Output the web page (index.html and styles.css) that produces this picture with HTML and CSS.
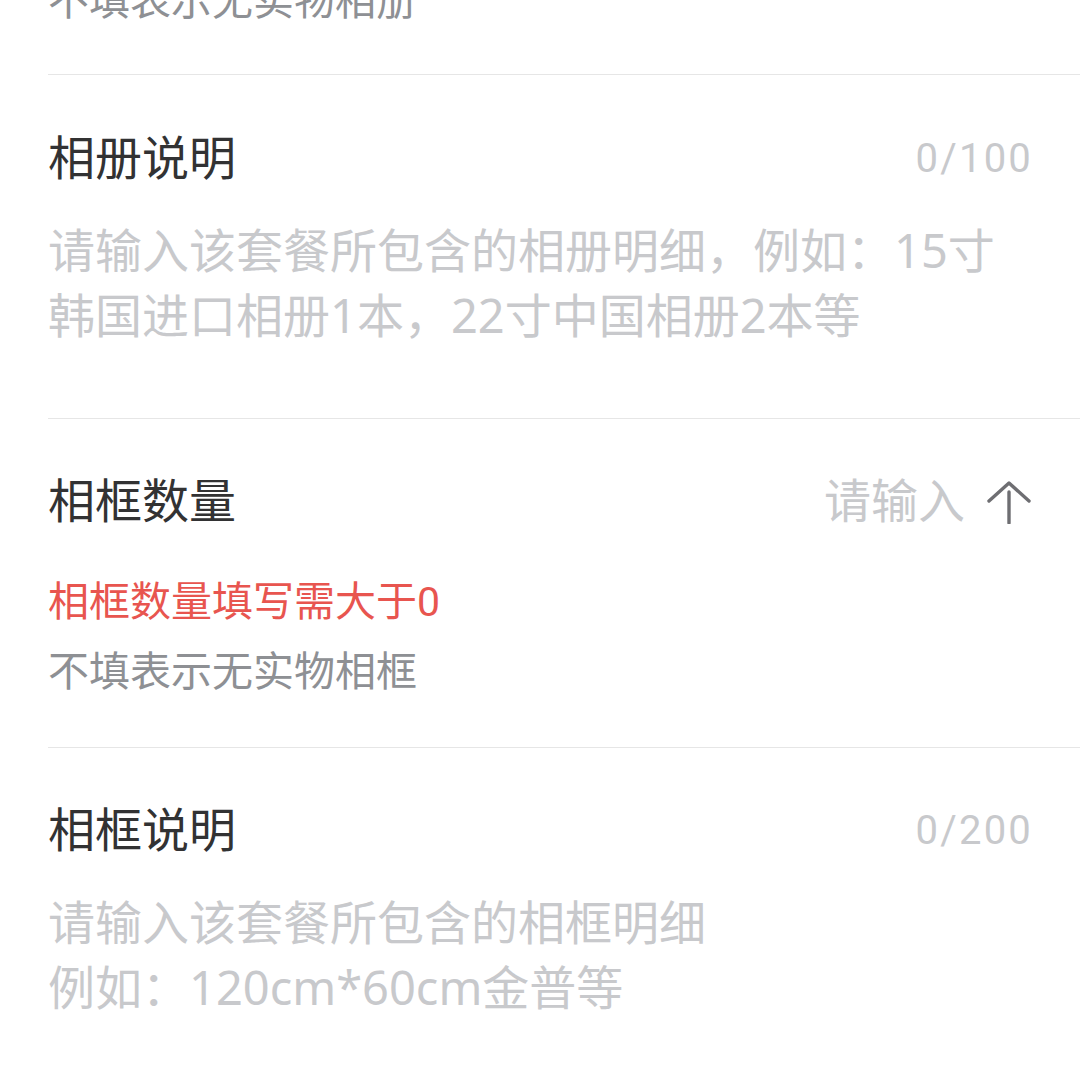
FILE: index.html
```html
<!DOCTYPE html>
<html lang="zh-CN">
<head>
<meta charset="utf-8">
<link rel="stylesheet" href="styles.css">
</head>
<body>
<div class="form">
  <div class="section section-top">
    <div class="hint">不填表示无实物相册</div>
  </div>

  <div class="section section-album-desc">
    <div class="row">
      <div class="label">相册说明</div>
      <div class="counter">0/100</div>
    </div>
    <div class="textarea">请输入该套餐所包含的相册明细，例如：15寸韩国进口相册1本，22寸中国相册2本等</div>
  </div>

  <div class="section section-frame-count">
    <div class="row">
      <div class="label">相框数量</div>
      <div class="value">
        <span class="input-ph">请输入</span>
        <svg class="arrow" width="44" height="44" viewBox="0 0 44 44" aria-hidden="true">
          <path d="M2 21 L22 3 L42 21" fill="none" stroke="#6e6e72" stroke-width="3.4" stroke-linecap="round" stroke-linejoin="round"/>
          <path d="M22 12 L22 43" fill="none" stroke="#6e6e72" stroke-width="3.4" stroke-linecap="round"/>
        </svg>
      </div>
    </div>
    <div class="error">相框数量填写需大于0</div>
    <div class="hint">不填表示无实物相框</div>
  </div>

  <div class="section section-frame-desc">
    <div class="row">
      <div class="label">相框说明</div>
      <div class="counter">0/200</div>
    </div>
    <div class="textarea">请输入该套餐所包含的相框明细<br>例如：120cm*60cm金普等</div>
  </div>
</div>
</body>
</html>
```

FILE: styles.css
```css
html, body {
  margin: 0;
  padding: 0;
  background: #ffffff;
}

body {
  font-family: Roboto, "Noto Sans CJK SC", "Noto Sans", sans-serif;
  overflow: hidden;
}

.form {
  display: flex;
  flex-direction: column;
}

.section {
  margin-left: 48px;
  padding-right: 49px;
  border-bottom: 1px solid #e6e6e6;
}

.section-top {
  margin-top: -34px;
  padding-bottom: 38px;
}

.section-album-desc {
  padding-top: 51px;
  padding-bottom: 70px;
}

.section-frame-count {
  padding-top: 50px;
  padding-bottom: 40px;
}

.section-frame-desc {
  padding-top: 50px;
  padding-bottom: 60px;
  border-bottom: none;
}

.row {
  display: flex;
  align-items: center;
  justify-content: space-between;
  height: 66px;
}

.label {
  font-size: 47px;
  line-height: 66px;
  color: #323233;
}

.counter {
  font-size: 40px;
  line-height: 66px;
  letter-spacing: 2.2px;
  margin-right: -2px;
  color: #c8c9cc;
}

.value {
  display: flex;
  align-items: center;
  gap: 22px;
}

.input-ph {
  font-size: 47px;
  line-height: 66px;
  color: #c8c9cc;
}

.arrow {
  display: block;
}

.textarea {
  margin-top: 26px;
  font-family: "Noto Sans", "Noto Sans CJK SC", sans-serif;
  font-size: 47px;
  line-height: 65px;
  color: #c8c9cc;
}

.error {
  margin-top: 32px;
  font-size: 41px;
  line-height: 70px;
  color: #e8554f;
}

.hint {
  font-size: 41px;
  line-height: 70px;
  color: #8e9094;
}
```
